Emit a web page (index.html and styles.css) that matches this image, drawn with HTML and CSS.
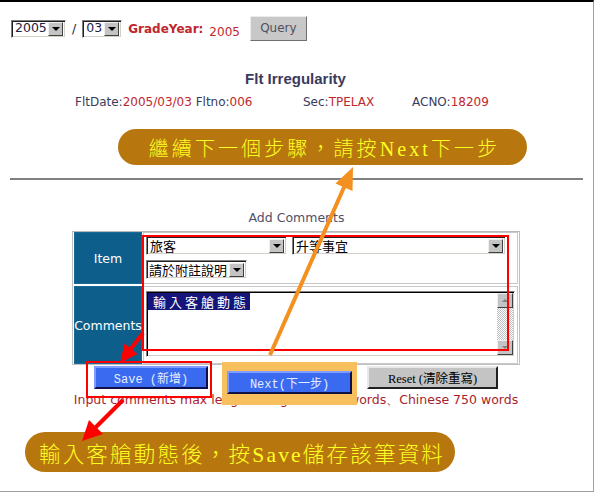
FILE: index.html
```html
<!DOCTYPE html>
<html lang="zh-Hant">
<head>
<meta charset="utf-8">
<title>Flt Irregularity</title>
<link rel="stylesheet" href="styles.css">
</head>
<body>
<div class="page">
  <div class="toprow">
    <span class="sel sel-year"><span class="sel-val">2005</span><span class="sel-btn"></span></span>
    <span class="slash">/</span>
    <span class="sel sel-month"><span class="sel-val">03</span><span class="sel-btn"></span></span>
    <span class="grade-label">GradeYear:</span>
    <span class="grade-val">2005</span>
    <span class="query">Query</span>
  </div>

  <h1 class="title">Flt Irregularity</h1>

  <div class="info">
    <span>FltDate:<em>2005/03/03</em> Fltno:<em>006</em></span>
    <span>Sec:<em>TPELAX</em></span>
    <span>ACNO:<em>18209</em></span>
  </div>

  <div class="banner banner-next">繼續下一個步驟，請按Next下一步</div>

  <div class="rule"></div>

  <div class="add-title">Add Comments</div>

  <div class="form">
    <div class="grid">
      <div class="label">Item</div>
      <div class="cell cell-item">
        <div class="sel-line">
          <span class="sel cjk sel-a"><span class="sel-val">旅客</span><span class="sel-btn"></span></span>
          <span class="sel cjk sel-b"><span class="sel-val">升等事宜</span><span class="sel-btn"></span></span>
        </div>
        <div class="sel-line second">
          <span class="sel cjk sel-c"><span class="sel-val">請於附註說明</span><span class="sel-btn"></span></span>
        </div>
      </div>
      <div class="label">Comments</div>
      <div class="cell cell-comments">
        <div class="textarea">
          <div class="ta-text"><span class="selected">輸入客艙動態</span></div>
          <div class="scrollbar">
            <span class="sb-btn sb-up"></span>
            <span class="sb-track"></span>
            <span class="sb-btn sb-down"></span>
          </div>
        </div>
      </div>
    </div>
    <div class="mark mark-inputs"></div>

    <div class="buttons">
      <span class="hl-next"></span>
      <span class="btn btn-blue btn-save">Save (新增)</span>
      <span class="btn btn-blue btn-next">Next(下一步)</span>
      <span class="btn btn-grey btn-reset">Reset (清除重寫)</span>
      <span class="mark mark-save"></span>
    </div>

    <div class="note">Input comments max length：English 1500 words、Chinese 750 words</div>
  </div>

  <div class="banner banner-save">輸入客艙動態後，按Save儲存該筆資料</div>

  <svg class="arrows" width="594" height="494" viewBox="0 0 594 494">
    <line x1="270" y1="355" x2="345" y2="185" stroke="#f39020" stroke-width="4"/>
    <polygon points="353,167 352.5,191 335.5,183.5" fill="#f39020"/>
    <line x1="143" y1="333" x2="129" y2="351" stroke="#ff0000" stroke-width="4"/>
    <polygon points="120,363 137.5,354 124.5,343.5" fill="#ff0000"/>
    <line x1="123" y1="400" x2="95" y2="428" stroke="#ff0000" stroke-width="4"/>
    <polygon points="82,441 103,434 89,420" fill="#ff0000"/>
  </svg>
</div>
</body>
</html>
```

FILE: styles.css
```css
* { box-sizing: border-box; }

html, body {
  margin: 0;
  padding: 0;
  background: #ffffff;
}

body {
  font-family: "DejaVu Sans", Verdana, sans-serif;
  font-size: 12.5px;
  color: #333355;
}

.page {
  position: relative;
  width: 594px;
  height: 492px;
  border-top: 2px solid #000000;
  border-right: 1px solid #a0a0a0;
  border-bottom: 1px solid #a0a0a0;
  overflow: hidden;
}

/* ---------- top query row ---------- */
.toprow {
  display: flex;
  align-items: center;
  margin-top: 14px;
  padding-left: 11px;
  height: 25px;
}

.sel {
  display: inline-flex;
  align-items: center;
  justify-content: space-between;
  height: 18px;
  background: #ffffff;
  border: 1px solid;
  border-color: #808080 #ffffff #ffffff #808080;
  box-shadow: inset 1px 1px 0 #202020, inset -1px -1px 0 #d4d0c8;
  padding: 0 2px 0 3px;
  font-size: 12.5px;
  color: #222244;
  line-height: 1;
  white-space: nowrap;
}

.sel-btn {
  position: relative;
  width: 15px;
  height: 14px;
  background: #c4c4c4;
  border: 1px solid;
  border-color: #f0f0f0 #404040 #404040 #f0f0f0;
  flex: none;
}

.sel-btn::after {
  content: "";
  position: absolute;
  left: 3px;
  top: 4px;
  border-left: 4px solid transparent;
  border-right: 4px solid transparent;
  border-top: 4px solid #000000;
}

.sel-year { width: 55px; }
.sel-month { width: 40px; }

.slash {
  margin: 0 6px 0 6px;
  color: #222244;
}

.grade-label {
  margin-left: 6px;
  font-weight: bold;
  font-size: 12px;
  color: #c0272d;
}

.grade-val {
  margin-left: 6px;
  padding-top: 6px;
  font-size: 12px;
  color: #c0272d;
}

.query {
  margin-left: 10px;
  width: 57px;
  height: 25px;
  display: inline-flex;
  align-items: center;
  justify-content: center;
  background: #c8c8c8;
  border: 1px solid;
  border-color: #ececec #707070 #707070 #ececec;
  color: #505060;
  font-size: 12px;
  padding-bottom: 2px;
}

/* ---------- title & info ---------- */
.title {
  margin: 29px 0 0 0;
  text-align: center;
  font-family: "Liberation Sans", Arial, sans-serif;
  font-size: 15px;
  line-height: 18px;
  font-weight: bold;
  color: #3a3a5c;
  padding-right: 2px;
}

.info {
  display: grid;
  grid-template-columns: 228px 109px auto;
  margin: 7px 0 0 75px;
  line-height: 14px;
  font-size: 12px;
  color: #3a3a5c;
}

.info em {
  font-style: normal;
  color: #c0272d;
}

/* ---------- banners ---------- */
.banner {
  display: flex;
  align-items: center;
  justify-content: center;
  background: #b7770e;
  color: #ffff22;
  font-family: "Liberation Serif", "Noto Sans CJK TC", serif;
  font-weight: 300;
  white-space: nowrap;
}

.banner-next {
  margin: 20px 0 0 118px;
  width: 409px;
  height: 36px;
  border-radius: 18px;
  font-size: 20px;
  letter-spacing: 3.1px;
  padding-left: 4px;
}

.banner-save {
  margin: 25px 0 0 25px;
  width: 430px;
  height: 40px;
  border-radius: 20px;
  font-size: 21.5px;
  letter-spacing: 2.2px;
  padding-left: 4px;
}

.rule {
  margin: 13px 0 0 10px;
  width: 573px;
  height: 2px;
  background: #808080;
}

.add-title {
  margin-top: 31px;
  text-align: center;
  line-height: 14px;
  font-size: 12.5px;
  color: #50506a;
}

/* ---------- form ---------- */
.form {
  position: relative;
  margin: 6px 0 0 72px;
  width: 448px;
}

.grid {
  display: grid;
  grid-template-columns: 68px 1fr;
  grid-template-rows: 52px 78px;
  column-gap: 1px;
  row-gap: 2px;
  border: 1px solid #c0c0c0;
  border-top-color: #b8b8b8;
  padding: 0 1px;
}

.label {
  display: flex;
  align-items: center;
  justify-content: center;
  background: #0e5e8c;
  color: #ffffff;
  font-size: 12.5px;
  border: 1px solid #1a6a98;
}

.cell {
  border: 1px solid #c8c8c8;
  background: #ffffff;
}

.cell-item {
  padding: 3px 0 0 2px;
}

.cjk {
  font-family: "Noto Sans CJK TC", sans-serif;
  font-size: 13px;
  color: #000000;
}

.sel-line {
  display: flex;
  gap: 5px;
}

.sel-line.second {
  margin-top: 5px;
}

.sel-a { width: 141px; height: 19px; }
.sel-b { width: 214px; height: 19px; }
.sel-c { width: 101px; height: 19px; padding-left: 2px; }

.cell-comments {
  padding: 4px 0 0 2px;
}

.textarea {
  display: flex;
  width: 369px;
  height: 66px;
  background: #ffffff;
  border: 1px solid;
  border-color: #808080 #ffffff #ffffff #808080;
  box-shadow: inset 1px 1px 0 #000000, inset -1px -1px 0 #d4d0c8;
  padding: 1px;
}

.ta-text {
  flex: 1;
}

.selected {
  display: inline-block;
  background: #14147a;
  color: #ffffff;
  font-family: "Noto Sans CJK TC", sans-serif;
  font-size: 13px;
  line-height: 17px;
  letter-spacing: 3px;
  padding: 0 1px 0 5px;
}

.scrollbar {
  width: 16px;
  display: flex;
  flex-direction: column;
}

.sb-btn {
  position: relative;
  height: 15px;
  background: #c4c4c4;
  border: 1px solid;
  border-color: #f0f0f0 #404040 #404040 #f0f0f0;
}

.sb-up::after,
.sb-down::after {
  content: "";
  position: absolute;
  left: 4px;
  border-left: 3px solid transparent;
  border-right: 3px solid transparent;
}

.sb-up::after {
  top: 5px;
  border-bottom: 3px solid #808080;
}

.sb-down::after {
  top: 5px;
  border-top: 3px solid #808080;
}

.sb-track {
  flex: 1;
  background: repeating-conic-gradient(#c0c0c0 0 25%, #ffffff 0 50%) 0 0 / 2px 2px;
}

/* ---------- buttons ---------- */
.buttons {
  position: relative;
  display: flex;
  align-items: flex-start;
  height: 28px;
  margin-top: 1px;
  padding-left: 22px;
}

.btn {
  position: relative;
  display: inline-flex;
  align-items: center;
  justify-content: center;
  height: 23px;
  white-space: nowrap;
}

.btn-blue {
  background: #3a6af0;
  color: #e4eeff;
  font-family: "Liberation Mono", "Noto Sans CJK TC", monospace;
  font-size: 12px;
  border: 2px solid;
  border-color: #7f9cff #101048 #101048 #7f9cff;
}

.btn-save { width: 114px; }

.btn-next {
  width: 125px;
  margin: 5px 0 0 19px;
  z-index: 2;
}

.btn-grey {
  background: #c4c4c4;
  color: #000000;
  font-family: "Liberation Serif", "Noto Sans CJK TC", serif;
  font-size: 12.5px;
  border: 2px solid;
  border-color: #e8e8e8 #202020 #202020 #e8e8e8;
}

.btn-reset {
  width: 131px;
  margin-left: 15px;
}

.hl-next {
  position: absolute;
  left: 150px;
  top: -4px;
  width: 135px;
  height: 43px;
  background: #f7bf5e;
  z-index: 1;
}

.mark {
  position: absolute;
  border: 2px solid #ff0000;
  z-index: 3;
}

.mark-save {
  left: 14px;
  top: -5px;
  width: 126px;
  height: 37px;
}

.mark-inputs {
  left: 70px;
  top: 4px;
  width: 367px;
  height: 116px;
}

.note {
  position: relative;
  text-align: center;
  line-height: 14px;
  font-size: 12.5px;
  color: #a81e2c;
  white-space: nowrap;
  margin-top: -1px;
}

/* ---------- annotation arrows ---------- */
.arrows {
  position: absolute;
  left: 0;
  top: -2px;
  pointer-events: none;
  z-index: 5;
}
```
